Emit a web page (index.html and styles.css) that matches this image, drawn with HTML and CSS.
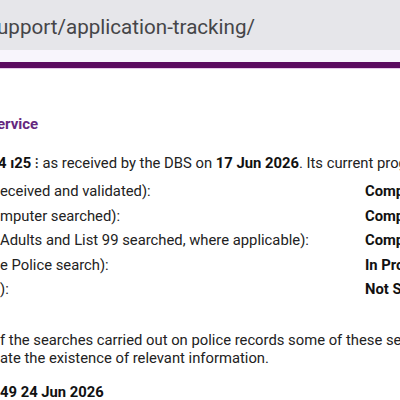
FILE: index.html
```html
<!DOCTYPE html>
<html lang="en">
<head>
    <meta charset="UTF-8">
    <meta name="viewport" content="width=device-width, initial-scale=1.0">
    <title>Application Tracking</title>
    <link rel="stylesheet" href="styles.css">
</head>
<body>
    <!-- Browser address bar -->
    <div class="url-bar">
        <span class="url-text">upport/application-tracking/</span>
    </div>
    <div class="url-strip"></div>
    <div class="brand-bar"></div>

    <!-- Page content -->
    <div class="content">
        <h2 class="service-title">ervice</h2>
        <p class="intro"><b>4 ı25</b> ⁝ as received by the DBS on <b>17 Jun 2026</b>. Its current progress is:</p>

        <div class="stages">
            <div class="stage-label">eceived and validated):</div>
            <div class="stage-status">Completed</div>
            <div class="stage-label">mputer searched):</div>
            <div class="stage-status">Completed</div>
            <div class="stage-label">Adults and List 99 searched, where applicable):</div>
            <div class="stage-status">Completed</div>
            <div class="stage-label">e Police search):</div>
            <div class="stage-status">In Progress</div>
            <div class="stage-label">):</div>
            <div class="stage-status">Not Started</div>
        </div>

        <p class="note">f the searches carried out on police records some of these searches<br>ate the existence of relevant information.</p>

        <p class="updated">49 24 Jun 2026</p>
    </div>
</body>
</html>
```

FILE: styles.css
```css
/* General Styles */
body {
    margin: 0;
    background: #ffffff;
    font-family: Roboto, "Noto Sans", sans-serif;
    color: #222222;
    overflow: hidden;
    width: 400px;
}
.url-bar {
    background: #e6e6ea;
    height: 50px;
    display: flex;
    align-items: center;
    white-space: nowrap;
}
.url-text {
    font-size: 20.6px;
    color: #454548;
    margin-left: -3px;
    padding-top: 4px;
}
.url-strip {
    background: #f8f5fc;
    height: 12px;
}
.brand-bar {
    background: #5c0b60;
    height: 6px;
    border-bottom: 1px solid #e8c9ea;
}
.content {
    white-space: nowrap;
    padding-top: 46px;
    font-size: 14.8px;
}
.service-title {
    margin: 0;
    font-size: 15px;
    font-weight: bold;
    color: #65287e;
    line-height: 18px;
    margin-left: -3px;
}
.intro {
    margin: 20px 0 0 -2px;
    line-height: 20px;
}
.intro b, .stage-status, .updated {
    color: #111111;
}
.stages {
    display: grid;
    grid-template-columns: 365px auto;
    grid-auto-rows: 24.5px;
    align-items: center;
    margin-top: 6px;
}
.stage-label {
    overflow: hidden;
}
.stage-status {
    font-weight: bold;
}
.note {
    margin: 29px 0 0;
    line-height: 18px;
}
.updated {
    margin: 16px 0 0;
    font-weight: bold;
}
```
